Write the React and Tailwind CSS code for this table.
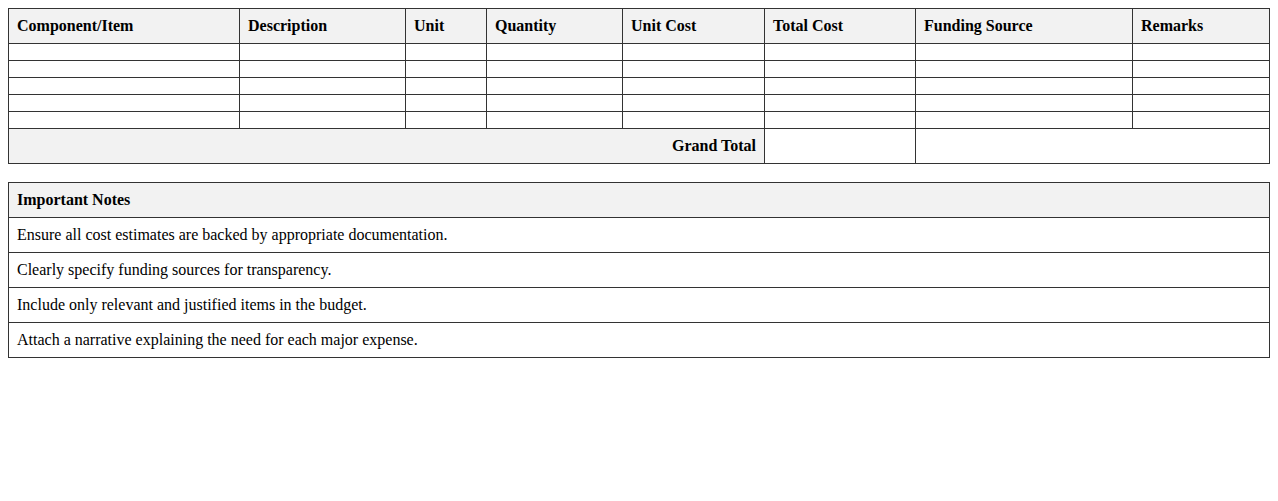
export default function App() {
  const cols = [231, 166, 81, 136, 142, 151, 217, null];
  const heads = ["Component/Item", "Description", "Unit", "Quantity", "Unit Cost", "Total Cost", "Funding Source", "Remarks"];
  const notes = [
    "Ensure all cost estimates are backed by appropriate documentation.",
    "Clearly specify funding sources for transparency.",
    "Include only relevant and justified items in the budget.",
    "Attach a narrative explaining the need for each major expense.",
  ];
  const cell = "border border-[#333] p-2 text-left";
  return (
    <div className="p-2 bg-white text-black text-[16px] leading-[normal]" style={{ fontFamily: '"Liberation Serif", "Times New Roman", serif' }}>
      <table className="w-full border-collapse table-fixed">
        <colgroup>
          {cols.map((w, i) => (
            <col key={i} style={w ? { width: w } : undefined} />
          ))}
        </colgroup>
        <thead>
          <tr className="bg-[#f2f2f2]">
            {heads.map((h) => (
              <th key={h} className={cell + " font-bold"}>{h}</th>
            ))}
          </tr>
        </thead>
        <tbody>
          {[0, 1, 2, 3, 4].map((r) => (
            <tr key={r}>
              {cols.map((_, i) => (
                <td key={i} className={cell}></td>
              ))}
            </tr>
          ))}
          <tr>
            <td colSpan={5} className="border border-[#333] p-2 text-right font-bold bg-[#f2f2f2]">Grand Total</td>
            <td className={cell}></td>
            <td colSpan={2} className={cell}></td>
          </tr>
        </tbody>
      </table>
      <table className="w-full border-collapse mt-[18px]">
        <thead>
          <tr className="bg-[#f2f2f2]">
            <th className={cell + " font-bold"}>Important Notes</th>
          </tr>
        </thead>
        <tbody>
          {notes.map((n) => (
            <tr key={n}>
              <td className={cell}>{n}</td>
            </tr>
          ))}
        </tbody>
      </table>
    </div>
  );
}
